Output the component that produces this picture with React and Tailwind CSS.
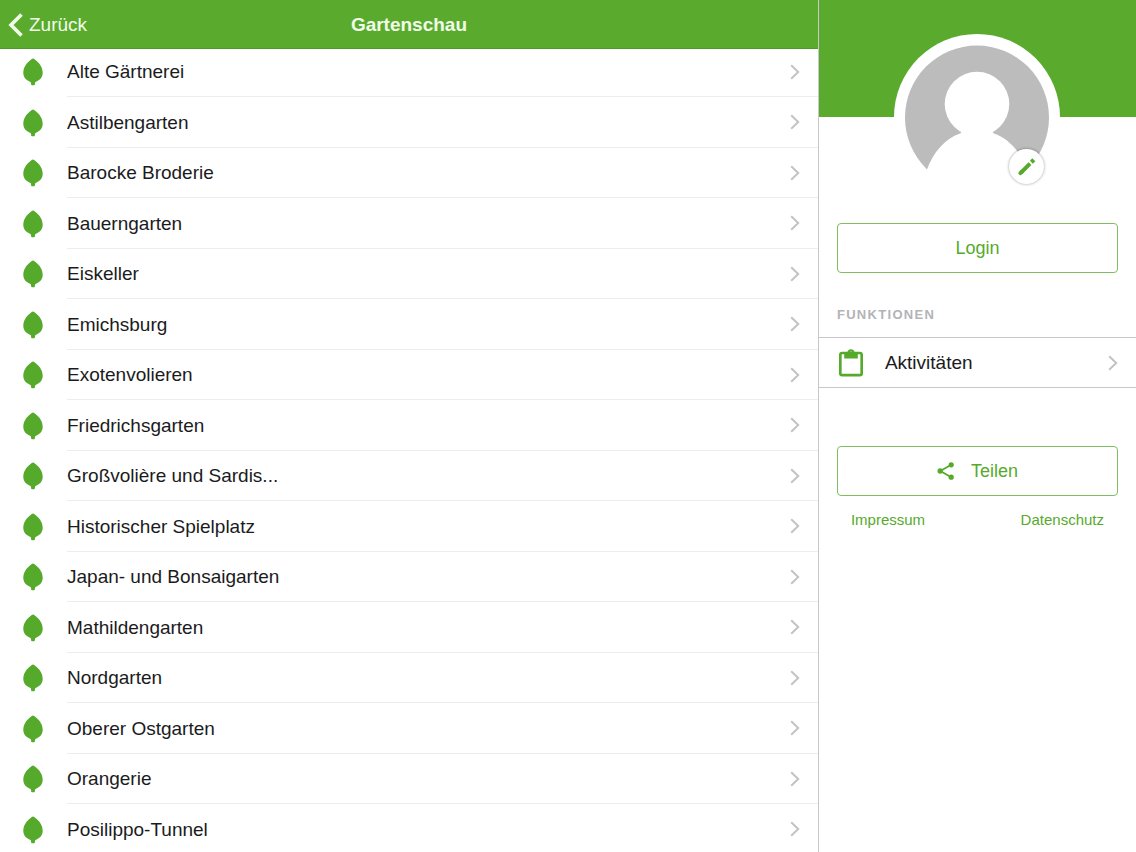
import React from 'react';

const places = [
  'Alte Gärtnerei',
  'Astilbengarten',
  'Barocke Broderie',
  'Bauerngarten',
  'Eiskeller',
  'Emichsburg',
  'Exotenvolieren',
  'Friedrichsgarten',
  'Großvolière und Sardis...',
  'Historischer Spielplatz',
  'Japan- und Bonsaigarten',
  'Mathildengarten',
  'Nordgarten',
  'Oberer Ostgarten',
  'Orangerie',
  'Posilippo-Tunnel',
];

const LeafIcon = () => (
  <svg width="20" height="28" viewBox="0 0 20 28" fill="#56aa2b" className="shrink-0" aria-hidden="true">
    <path d="M10 0.4C11 0.4 11.6 1.3 12.8 2.2C16.6 5 19.7 9.6 19.7 14.8C19.7 19 17.4 21.6 14 23.2C12.6 23.9 12.1 24.2 12 25L11.8 26.7C11.4 27.5 8.6 27.5 8.2 26.7L8 25C7.9 24.2 7.4 23.9 6 23.2C2.6 21.6 0.3 19 0.3 14.8C0.3 9.6 3.4 5 7.2 2.2C8.4 1.3 9 0.4 10 0.4Z" />
  </svg>
);

const Chevron = () => (
  <svg width="10" height="16" viewBox="0 0 10 16" fill="none" stroke="#c3c3c7" strokeWidth="2" className="shrink-0" aria-hidden="true">
    <path d="M1.2 1.2L8.2 8L1.2 14.8" />
  </svg>
);

const ClipboardIcon = () => (
  <svg width="24" height="28" viewBox="0 0 24 28" className="shrink-0" aria-hidden="true">
    <rect x="1.3" y="4" width="21.4" height="22.2" rx="1.8" fill="none" stroke="#56aa2b" strokeWidth="2.7" />
    <path
      fill="#56aa2b"
      fillRule="evenodd"
      d="M5.2 3.2H8.3C8.8 1.3 10.2 0.2 12 0.2C13.8 0.2 15.2 1.3 15.7 3.2H18.8V9.4H5.2ZM12 2.4A1.3 1.3 0 1 0 12 5A1.3 1.3 0 1 0 12 2.4Z"
    />
  </svg>
);

const ShareIcon = () => (
  <svg width="18" height="18" viewBox="0 0 18 18" fill="#56aa2b" aria-hidden="true">
    <path d="M14.2 2.8L3.4 9L14.2 15.2" fill="none" stroke="#56aa2b" strokeWidth="1.8" />
    <circle cx="14.2" cy="2.8" r="2.6" />
    <circle cx="3.2" cy="9" r="2.7" />
    <circle cx="14.2" cy="15.2" r="2.6" />
  </svg>
);

const PencilIcon = () => (
  <svg width="20" height="20" viewBox="0 0 20 20" fill="none" stroke="#56aa2b" strokeWidth="4" aria-hidden="true">
    <path d="M3.4 16.2L5 14.6" strokeLinecap="round" />
    <path d="M4 15.6L13 6.6" />
    <path d="M14.4 5.2L16.8 2.8" strokeWidth="4.2" />
  </svg>
);

const Avatar = () => (
  <svg width="166" height="166" viewBox="0 0 166 166" aria-hidden="true">
    <circle cx="83" cy="83" r="83" fill="#fff" />
    <circle cx="83" cy="83.5" r="72" fill="#bcbcbd" />
    <circle cx="83" cy="70" r="32.3" fill="#fff" />
    <path d="M33 135.5C39 119 50 105 66.5 99.2L69 96H97L99.5 99.2C116 105 127 119 133 135.5V161H33Z" fill="#fff" />
  </svg>
);

const PlaceList = () => (
  <main className="flex-1 min-w-0 flex flex-col">
    <header className="relative z-10 shrink-0 h-[49px] grid grid-cols-[1fr_auto_1fr] items-center pt-0.5 bg-[#5aab2d] border-b border-[#4c9b25] text-[19px] text-[#f1fbe9]">
      <button className="justify-self-start flex items-center gap-1.5 pl-2">
        <svg width="15" height="24" viewBox="0 0 15 24" fill="none" stroke="currentColor" strokeWidth="3.6" aria-hidden="true">
          <path d="M13.5 1.5L3 12L13.5 22.5" />
        </svg>
        Zurück
      </button>
      <h1 className="font-bold">Gartenschau</h1>
    </header>

    <ul className="-mt-0.5 flex-1 min-h-0 overflow-y-auto [scrollbar-width:none]">
      {places.map((place) => (
        <li key={place} className="odd:h-[50px] even:h-[51px]">
          <a href="#" className="h-full flex items-center pl-[23px]">
            <LeafIcon />
            <span className="ml-6 h-full flex-1 min-w-0 flex items-center justify-between pr-[18px] border-b border-[#ededef] text-[19px] text-[#1b1b1d]">
              <span className="truncate pt-0.5">{place}</span>
              <Chevron />
            </span>
          </a>
        </li>
      ))}
    </ul>
  </main>
);

const Sidebar = () => (
  <aside className="w-[28%] shrink-0 border-l border-[#c8c7cc] flex flex-col text-[#56aa2b]">
    <div className="h-[117px] bg-[#5aab2d] flex justify-center items-start pt-[34px]">
      <div className="relative shrink-0">
        <Avatar />
        <button
          aria-label="Profilbild bearbeiten"
          className="absolute right-4 bottom-4 size-[35px] rounded-full bg-white shadow-[0_0_3px_rgba(0,0,0,0.4)] flex items-center justify-center"
        >
          <PencilIcon />
        </button>
      </div>
    </div>

    <div className="px-[18px] pt-[106px]">
      <button className="w-full h-[50px] rounded border border-[#7fbe60] text-[18px]">Login</button>
    </div>

    <h2 className="mt-8 px-[18px] text-[13px] leading-5 font-bold tracking-widest text-[#b3b3b8]">FUNKTIONEN</h2>
    <a
      href="#"
      className="mt-3 h-[51px] flex items-center pl-5 pr-[18px] border-y border-[#c8c7cc] text-[19px] text-[#1b1b1d]"
    >
      <ClipboardIcon />
      <span className="ml-[22px] flex-1 pt-0.5">Aktivitäten</span>
      <Chevron />
    </a>

    <div className="px-[18px] pt-[58px]">
      <button className="w-full h-[50px] rounded border border-[#7fbe60] flex items-center justify-center gap-4 text-[18px]">
        <ShareIcon />
        Teilen
      </button>
    </div>
    <nav className="mt-3 px-8 flex justify-between text-[15px] leading-6">
      <a href="#">Impressum</a>
      <a href="#">Datenschutz</a>
    </nav>
  </aside>
);

const App = () => {
  return (
    <div className="h-screen flex overflow-hidden bg-white font-['Liberation_Sans',Arial,sans-serif]">
      <PlaceList />
      <Sidebar />
    </div>
  );
};

export default App;
